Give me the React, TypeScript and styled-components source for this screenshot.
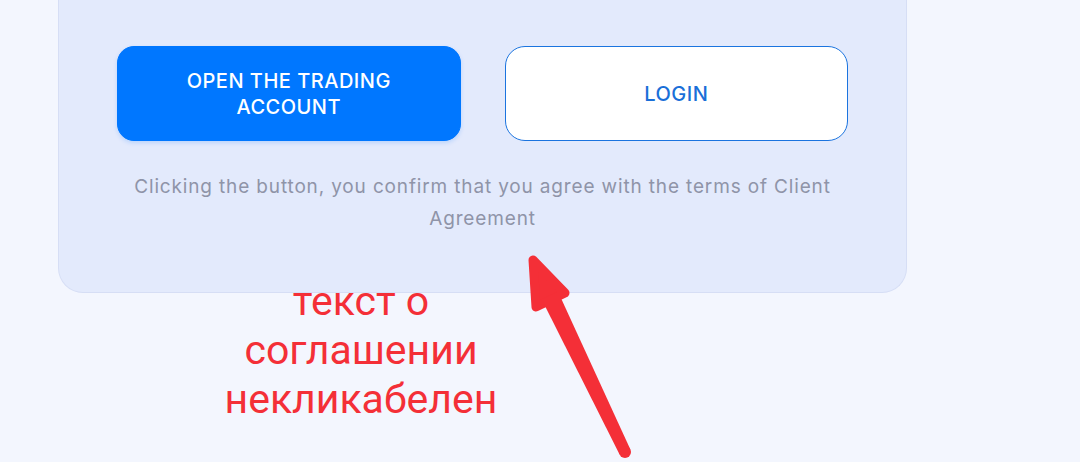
import React from 'react';
import styled, { createGlobalStyle } from 'styled-components';

const GlobalStyle = createGlobalStyle`
  html, body {
    margin: 0;
    padding: 0;
    background: #f3f6fe;
  }
  body {
    font-family: Inter, "Noto Sans", sans-serif;
    overflow: hidden;
  }
`;

const Page = styled.div`
  position: relative;
  width: 1080px;
  height: 462px;
  overflow: hidden;
`;

const Card = styled.section`
  width: 849px;
  box-sizing: border-box;
  margin-left: 58px;
  padding: 46px 58px 0;
  height: 293px;
  background: #e3eafc;
  border: 1px solid #d6def5;
  border-top: none;
  border-radius: 0 0 25px 25px;
`;

const Actions = styled.div`
  display: grid;
  grid-template-columns: 1fr 1fr;
  gap: 44px;
`;

const Button = styled.button<{ $variant: 'primary' | 'outline' }>`
  height: 95px;
  box-sizing: border-box;
  border-radius: ${({ $variant }) => ($variant === 'primary' ? '17px' : '20px')};
  border: 1px solid ${({ $variant }) => ($variant === 'primary' ? '#0077ff' : '#1b74df')};
  background: ${({ $variant }) => ($variant === 'primary' ? '#0077ff' : '#ffffff')};
  color: ${({ $variant }) => ($variant === 'primary' ? '#ffffff' : '#1a6fd8')};
  box-shadow: ${({ $variant }) =>
    $variant === 'primary' ? '0 2px 4px rgba(0, 119, 255, 0.18)' : 'none'};
  font-family: Inter, "Noto Sans", sans-serif;
  font-size: 20px;
  font-weight: 500;
  line-height: 26px;
  letter-spacing: 0.5px;
  text-transform: uppercase;
  padding: 0 60px;
  cursor: pointer;
`;

const Notice = styled.p`
  margin: 30px 0 0;
  text-align: center;
  color: #8f94a8;
  font-family: Inter, "Noto Sans", sans-serif;
  font-size: 19px;
  line-height: 32px;
  letter-spacing: 0.85px;
`;

const Annotation = styled.div`
  position: absolute;
  left: 200px;
  top: 277px;
  width: 322px;
  text-align: center;
  color: #f42f37;
  font-family: Roboto, "Noto Sans", sans-serif;
  font-size: 41px;
  line-height: 49px;
`;

const Arrow = styled.svg`
  position: absolute;
  left: 0;
  top: 0;
  pointer-events: none;
`;

export default function App() {
  return (
    <Page>
      <GlobalStyle />
      <Card>
        <Actions>
          <Button $variant="primary">Open the trading account</Button>
          <Button $variant="outline">Login</Button>
        </Actions>
        <Notice>
          Clicking the button, you confirm that you agree with the terms of Client Agreement
        </Notice>
      </Card>
      <Annotation>текст о соглашении некликабелен</Annotation>
      <Arrow width="1080" height="462" viewBox="0 0 1080 462">
        <polygon
          points="533,260 565,293 536,307"
          fill="#f42f37"
          stroke="#f42f37"
          strokeWidth="9"
          strokeLinejoin="round"
        />
        <polygon points="560,296 544,304 619.6,454.6 630.4,449.4" fill="#f42f37" />
        <circle cx="625" cy="452" r="6" fill="#f42f37" />
      </Arrow>
    </Page>
  );
}
